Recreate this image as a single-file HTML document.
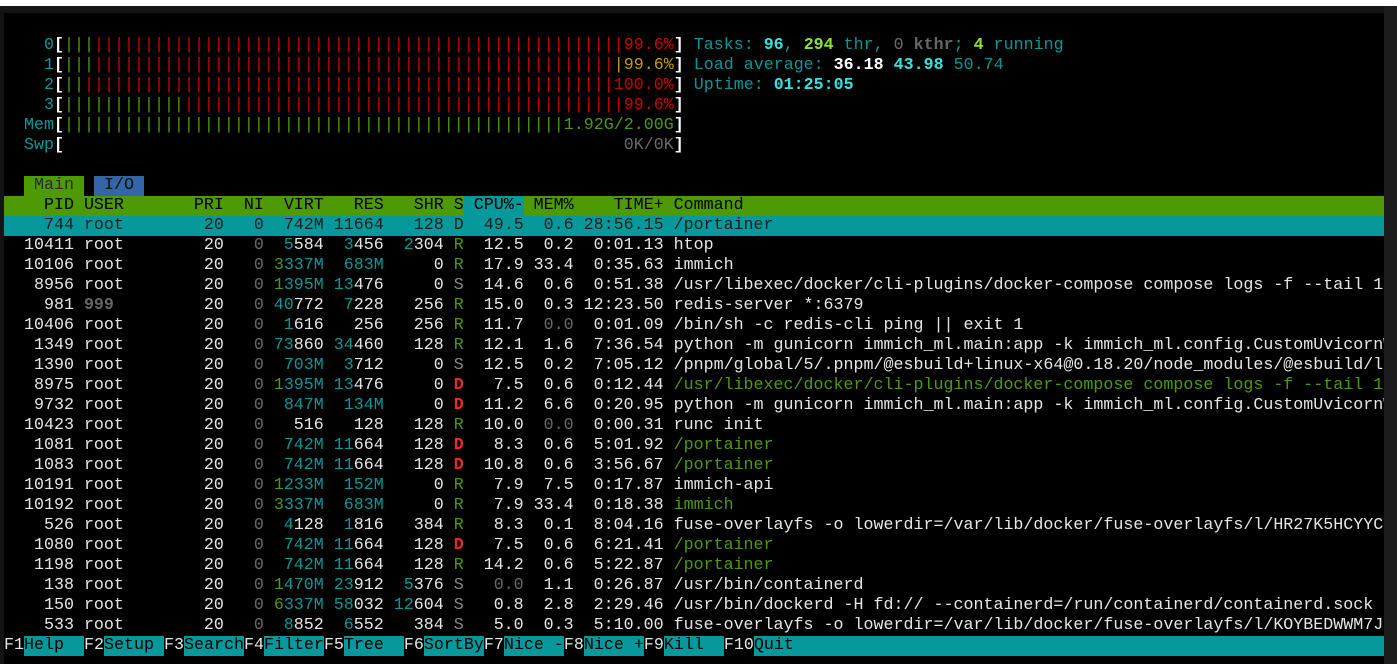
<!DOCTYPE html>
<html><head><meta charset="utf-8"><style>
html,body{margin:0;padding:0;background:#141414;width:1397px;height:664px;overflow:hidden}
#top{position:absolute;left:0;top:0;width:1397px;height:6px;background:#fff}
#side{position:absolute;left:1384px;top:6px;width:13px;height:658px;background:#1c1c1c}
#term{position:absolute;left:4px;top:13px;padding-top:3px;width:1380px;height:648px;background:#000;overflow:hidden;
font-family:"Liberation Mono",monospace;font-size:16.667px;line-height:20px;color:#e6e6e6}
.r{height:20px;white-space:pre;overflow:hidden}
.r span{display:inline-block;white-space:pre}
.a{width:7ch;text-align:right}.b{width:9ch;margin-left:1ch}.c{width:5ch;text-align:right}.d{width:4ch;text-align:right}
.e,.f,.g,.k{width:6ch;text-align:right}.h{width:2ch;text-align:right}.l{width:5ch;text-align:right}.m{width:9ch;text-align:right;margin-right:1ch}
.t{color:#06989a}.gn{color:#4e9a06}.gr{color:#6a6a6a}.rd{color:#cc0000}.yl{color:#c4a000}
.bw{color:#fff;font-weight:bold}.bc{color:#34e2e2;font-weight:bold}.bg{color:#8ae234;font-weight:bold}.bgr{color:#666;font-weight:bold}
.R{color:#4e9a06}.S{color:#888}.D{color:#ef2929;font-weight:bold}
.br{color:#fff;font-weight:bold}
.sel{background:#06989a;color:#1e1e1e}.sel *{color:#1e1e1e!important;font-weight:normal!important}
.hdr{background:#4e9a06;color:#000}
.fk{color:#e6e6e6}.fl{background:#06989a;color:#000}
</style></head><body>
<div id="top"></div><div id="side"></div>
<div id="term">
<div class="r"> </div>
<div class="r"><span class="t">    0</span><span class="br">[</span><span class="gn">|||</span><span class="rd">|||||||||||||||||||||||||||||||||||||||||||||||||||||99.6%</span><span class="br">]</span> <span class="t">Tasks: </span><span class="bc">96</span><span class="t">, </span><span class="bg">294</span><span class="t"> thr, </span><span class="gr">0 </span><span class="bgr">kthr</span><span class="t">; </span><span class="bg">4</span><span class="t"> running</span></div>
<div class="r"><span class="t">    1</span><span class="br">[</span><span class="gn">|||</span><span class="rd">||||||||||||||||||||||||||||||||||||||||||||||||||||</span><span class="yl">|99.6%</span><span class="br">]</span> <span class="t">Load average: </span><span class="bw">36.18 </span><span class="bc">43.98 </span><span class="t">50.74</span></div>
<div class="r"><span class="t">    2</span><span class="br">[</span><span class="gn">||</span><span class="rd">|||||||||||||||||||||||||||||||||||||||||||||||||||||100.0%</span><span class="br">]</span> <span class="t">Uptime: </span><span class="bc">01:25:05</span></div>
<div class="r"><span class="t">    3</span><span class="br">[</span><span class="gn">||||||||||||</span><span class="rd">||||||||||||||||||||||||||||||||||||||||||||99.6%</span><span class="br">]</span></div>
<div class="r"><span class="t">  Mem</span><span class="br">[</span><span class="gn">||||||||||||||||||||||||||||||||||||||||||||||||||1.92G/2.00G</span><span class="br">]</span></div>
<div class="r"><span class="t">  Swp</span><span class="br">[</span><span class="gr">                                                        0K/0K</span><span class="br">]</span></div>
<div class="r"> </div>
<div class="r">  <span style="background:#4e9a06;color:#2a2a2a"> Main </span> <span style="background:#3465a4;color:#111"> I/O </span></div>
<div class="r hdr"><span class="a">PID</span><span class="b">USER</span><span class="c">PRI</span><span class="d">NI</span><span class="e">VIRT</span><span class="f">RES</span><span class="g">SHR</span><span class="h">S</span><span class="k"><span style="background:#06989a"> CPU%-</span></span><span class="l">MEM%</span><span class="m">TIME+</span>Command</div>
<div class="r sel"><span class="a">744</span><span class="b">root</span><span class="c">20</span><span class="d">0</span><span class="e">742M</span><span class="f">11664</span><span class="g">128</span><span class="h">D</span><span class="k">49.5</span><span class="l">0.6</span><span class="m">28:56.15</span>/portainer                                                                                                                      </div>
<div class="r"><span class="a">10411</span><span class="b">root</span><span class="c">20</span><span class="d gr">0</span><span class="e"><span class="t">5</span>584</span><span class="f"><span class="t">3</span>456</span><span class="g"><span class="t">2</span>304</span><span class="h R">R</span><span class="k">12.5</span><span class="l">0.2</span><span class="m">0:01.13</span>htop</div>
<div class="r"><span class="a">10106</span><span class="b">root</span><span class="c">20</span><span class="d gr">0</span><span class="e"><span class="gn">3</span><span class="t">337M</span></span><span class="f t">683M</span><span class="g">0</span><span class="h R">R</span><span class="k">17.9</span><span class="l">33.4</span><span class="m">0:35.63</span>immich</div>
<div class="r"><span class="a">8956</span><span class="b">root</span><span class="c">20</span><span class="d gr">0</span><span class="e"><span class="gn">1</span><span class="t">395M</span></span><span class="f"><span class="t">13</span>476</span><span class="g">0</span><span class="h S">S</span><span class="k">14.6</span><span class="l">0.6</span><span class="m">0:51.38</span>/usr/libexec/docker/cli-plugins/docker-compose compose logs -f --tail 100</div>
<div class="r"><span class="a">981</span><span class="b bgr">999</span><span class="c">20</span><span class="d gr">0</span><span class="e"><span class="t">40</span>772</span><span class="f"><span class="t">7</span>228</span><span class="g">256</span><span class="h R">R</span><span class="k">15.0</span><span class="l">0.3</span><span class="m">12:23.50</span>redis-server *:6379</div>
<div class="r"><span class="a">10406</span><span class="b">root</span><span class="c">20</span><span class="d gr">0</span><span class="e"><span class="t">1</span>616</span><span class="f">256</span><span class="g">256</span><span class="h R">R</span><span class="k">11.7</span><span class="l gr">0.0</span><span class="m">0:01.09</span>/bin/sh -c redis-cli ping || exit 1</div>
<div class="r"><span class="a">1349</span><span class="b">root</span><span class="c">20</span><span class="d gr">0</span><span class="e"><span class="t">73</span>860</span><span class="f"><span class="t">34</span>460</span><span class="g">128</span><span class="h R">R</span><span class="k">12.1</span><span class="l">1.6</span><span class="m">7:36.54</span>python -m gunicorn immich_ml.main:app -k immich_ml.config.CustomUvicornWorker</div>
<div class="r"><span class="a">1390</span><span class="b">root</span><span class="c">20</span><span class="d gr">0</span><span class="e t">703M</span><span class="f"><span class="t">3</span>712</span><span class="g">0</span><span class="h S">S</span><span class="k">12.5</span><span class="l">0.2</span><span class="m">7:05.12</span>/pnpm/global/5/.pnpm/@esbuild+linux-x64@0.18.20/node_modules/@esbuild/linux-x64</div>
<div class="r"><span class="a">8975</span><span class="b">root</span><span class="c">20</span><span class="d gr">0</span><span class="e"><span class="gn">1</span><span class="t">395M</span></span><span class="f"><span class="t">13</span>476</span><span class="g">0</span><span class="h D">D</span><span class="k">7.5</span><span class="l">0.6</span><span class="m">0:12.44</span><span class="gn">/usr/libexec/docker/cli-plugins/docker-compose compose logs -f --tail 100</span></div>
<div class="r"><span class="a">9732</span><span class="b">root</span><span class="c">20</span><span class="d gr">0</span><span class="e t">847M</span><span class="f t">134M</span><span class="g">0</span><span class="h D">D</span><span class="k">11.2</span><span class="l">6.6</span><span class="m">0:20.95</span>python -m gunicorn immich_ml.main:app -k immich_ml.config.CustomUvicornWorker</div>
<div class="r"><span class="a">10423</span><span class="b">root</span><span class="c">20</span><span class="d gr">0</span><span class="e">516</span><span class="f">128</span><span class="g">128</span><span class="h R">R</span><span class="k">10.0</span><span class="l gr">0.0</span><span class="m">0:00.31</span>runc init</div>
<div class="r"><span class="a">1081</span><span class="b">root</span><span class="c">20</span><span class="d gr">0</span><span class="e t">742M</span><span class="f"><span class="t">11</span>664</span><span class="g">128</span><span class="h D">D</span><span class="k">8.3</span><span class="l">0.6</span><span class="m">5:01.92</span><span class="gn">/portainer</span></div>
<div class="r"><span class="a">1083</span><span class="b">root</span><span class="c">20</span><span class="d gr">0</span><span class="e t">742M</span><span class="f"><span class="t">11</span>664</span><span class="g">128</span><span class="h D">D</span><span class="k">10.8</span><span class="l">0.6</span><span class="m">3:56.67</span><span class="gn">/portainer</span></div>
<div class="r"><span class="a">10191</span><span class="b">root</span><span class="c">20</span><span class="d gr">0</span><span class="e"><span class="gn">1</span><span class="t">233M</span></span><span class="f t">152M</span><span class="g">0</span><span class="h R">R</span><span class="k">7.9</span><span class="l">7.5</span><span class="m">0:17.87</span>immich-api</div>
<div class="r"><span class="a">10192</span><span class="b">root</span><span class="c">20</span><span class="d gr">0</span><span class="e"><span class="gn">3</span><span class="t">337M</span></span><span class="f t">683M</span><span class="g">0</span><span class="h R">R</span><span class="k">7.9</span><span class="l">33.4</span><span class="m">0:18.38</span><span class="gn">immich</span></div>
<div class="r"><span class="a">526</span><span class="b">root</span><span class="c">20</span><span class="d gr">0</span><span class="e"><span class="t">4</span>128</span><span class="f"><span class="t">1</span>816</span><span class="g">384</span><span class="h R">R</span><span class="k">8.3</span><span class="l">0.1</span><span class="m">8:04.16</span>fuse-overlayfs -o lowerdir=/var/lib/docker/fuse-overlayfs/l/HR27K5HCYYC7Q</div>
<div class="r"><span class="a">1080</span><span class="b">root</span><span class="c">20</span><span class="d gr">0</span><span class="e t">742M</span><span class="f"><span class="t">11</span>664</span><span class="g">128</span><span class="h D">D</span><span class="k">7.5</span><span class="l">0.6</span><span class="m">6:21.41</span><span class="gn">/portainer</span></div>
<div class="r"><span class="a">1198</span><span class="b">root</span><span class="c">20</span><span class="d gr">0</span><span class="e t">742M</span><span class="f"><span class="t">11</span>664</span><span class="g">128</span><span class="h R">R</span><span class="k">14.2</span><span class="l">0.6</span><span class="m">5:22.87</span><span class="gn">/portainer</span></div>
<div class="r"><span class="a">138</span><span class="b">root</span><span class="c">20</span><span class="d gr">0</span><span class="e"><span class="gn">1</span><span class="t">470M</span></span><span class="f"><span class="t">23</span>912</span><span class="g"><span class="t">5</span>376</span><span class="h S">S</span><span class="k gr">0.0</span><span class="l">1.1</span><span class="m">0:26.87</span>/usr/bin/containerd</div>
<div class="r"><span class="a">150</span><span class="b">root</span><span class="c">20</span><span class="d gr">0</span><span class="e"><span class="gn">6</span><span class="t">337M</span></span><span class="f"><span class="t">58</span>032</span><span class="g"><span class="t">12</span>604</span><span class="h S">S</span><span class="k">0.8</span><span class="l">2.8</span><span class="m">2:29.46</span>/usr/bin/dockerd -H fd:// --containerd=/run/containerd/containerd.sock</div>
<div class="r"><span class="a">533</span><span class="b">root</span><span class="c">20</span><span class="d gr">0</span><span class="e"><span class="t">8</span>852</span><span class="f"><span class="t">6</span>552</span><span class="g">384</span><span class="h S">S</span><span class="k">5.0</span><span class="l">0.3</span><span class="m">5:10.00</span>fuse-overlayfs -o lowerdir=/var/lib/docker/fuse-overlayfs/l/KOYBEDWWM7JQ</div>
<div class="r"><span class="fk">F1</span><span class="fl">Help  </span><span class="fk">F2</span><span class="fl">Setup </span><span class="fk">F3</span><span class="fl">Search</span><span class="fk">F4</span><span class="fl">Filter</span><span class="fk">F5</span><span class="fl">Tree  </span><span class="fk">F6</span><span class="fl">SortBy</span><span class="fk">F7</span><span class="fl">Nice -</span><span class="fk">F8</span><span class="fl">Nice +</span><span class="fk">F9</span><span class="fl">Kill  </span><span class="fk">F10</span><span class="fl">Quit                                                                        </span></div>
</div>
</body></html>
